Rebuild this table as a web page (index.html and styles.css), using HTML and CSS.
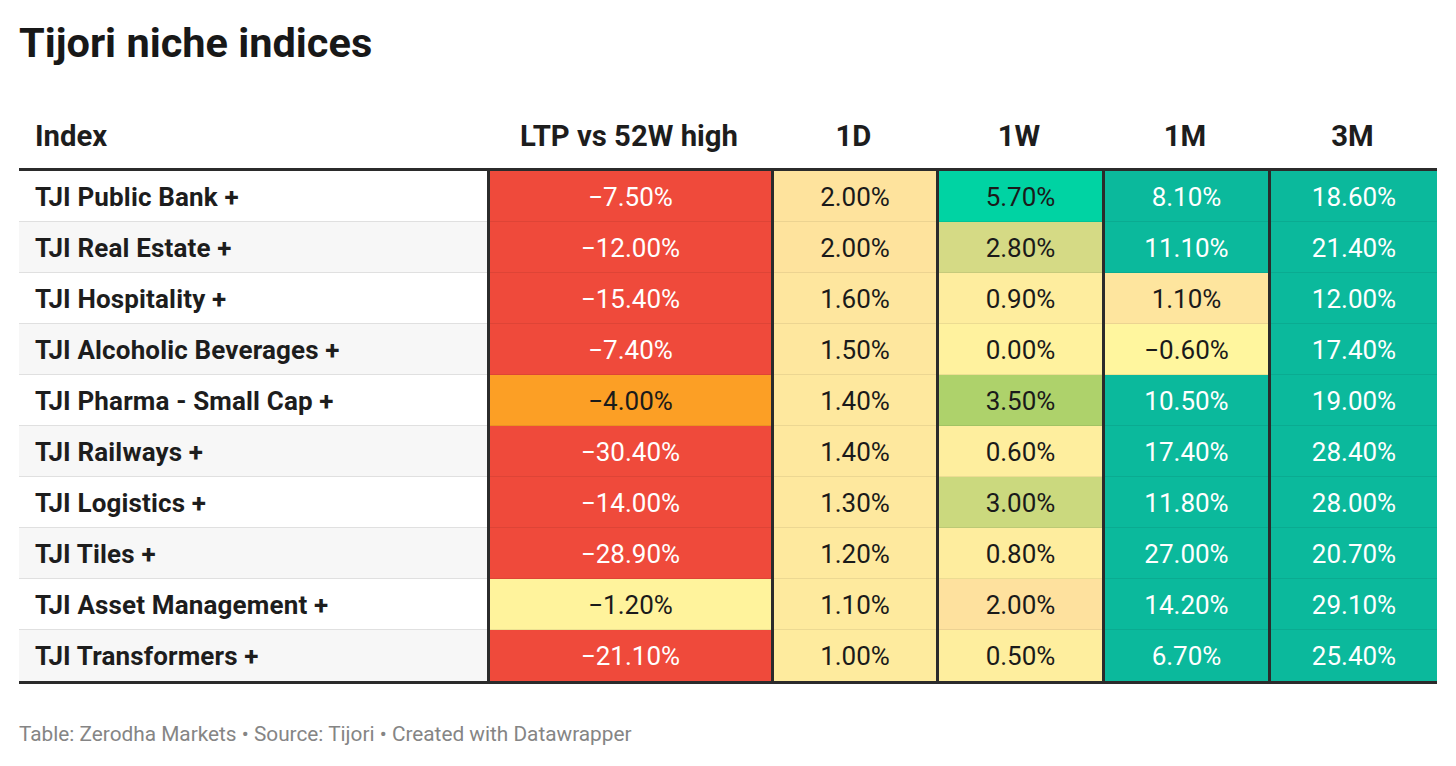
FILE: index.html
```html
<!DOCTYPE html>
<html lang="en">
<head>
<meta charset="utf-8">
<title>Tijori niche indices</title>
<link rel="stylesheet" href="styles.css">
</head>
<body>
<div class="chart">
  <h1 class="title">Tijori niche indices</h1>
  <div class="table">
    <div class="row head">
      <div class="th left">Index</div>
      <div class="th">LTP vs 52W high</div>
      <div class="th">1D</div>
      <div class="th">1W</div>
      <div class="th">1M</div>
      <div class="th">3M</div>
    </div>
    <div class="row">
      <div class="name">TJI Public Bank +</div>
      <div class="v red">−7.50%</div>
      <div class="v" style="background:#fee39d">2.00%</div>
      <div class="v" style="background:#00d3a3">5.70%</div>
      <div class="v teal">8.10%</div>
      <div class="v teal">18.60%</div>
    </div>
    <div class="row alt">
      <div class="name">TJI Real Estate +</div>
      <div class="v red">−12.00%</div>
      <div class="v" style="background:#fee39d">2.00%</div>
      <div class="v" style="background:#d5da85">2.80%</div>
      <div class="v teal">11.10%</div>
      <div class="v teal">21.40%</div>
    </div>
    <div class="row">
      <div class="name">TJI Hospitality +</div>
      <div class="v red">−15.40%</div>
      <div class="v" style="background:#fee69e">1.60%</div>
      <div class="v" style="background:#feed9e">0.90%</div>
      <div class="v" style="background:#fee59e">1.10%</div>
      <div class="v teal">12.00%</div>
    </div>
    <div class="row alt">
      <div class="name">TJI Alcoholic Beverages +</div>
      <div class="v red">−7.40%</div>
      <div class="v" style="background:#fee79e">1.50%</div>
      <div class="v" style="background:#fff29e">0.00%</div>
      <div class="v" style="background:#fff69e">−0.60%</div>
      <div class="v teal">17.40%</div>
    </div>
    <div class="row">
      <div class="name">TJI Pharma - Small Cap +</div>
      <div class="v" style="background:#fc9f25">−4.00%</div>
      <div class="v" style="background:#fee89e">1.40%</div>
      <div class="v" style="background:#aed26b">3.50%</div>
      <div class="v teal">10.50%</div>
      <div class="v teal">19.00%</div>
    </div>
    <div class="row alt">
      <div class="name">TJI Railways +</div>
      <div class="v red">−30.40%</div>
      <div class="v" style="background:#fee89e">1.40%</div>
      <div class="v" style="background:#feee9e">0.60%</div>
      <div class="v teal">17.40%</div>
      <div class="v teal">28.40%</div>
    </div>
    <div class="row">
      <div class="name">TJI Logistics +</div>
      <div class="v red">−14.00%</div>
      <div class="v" style="background:#fee89e">1.30%</div>
      <div class="v" style="background:#cbd97e">3.00%</div>
      <div class="v teal">11.80%</div>
      <div class="v teal">28.00%</div>
    </div>
    <div class="row alt">
      <div class="name">TJI Tiles +</div>
      <div class="v red">−28.90%</div>
      <div class="v" style="background:#fee99e">1.20%</div>
      <div class="v" style="background:#feed9e">0.80%</div>
      <div class="v teal">27.00%</div>
      <div class="v teal">20.70%</div>
    </div>
    <div class="row">
      <div class="name">TJI Asset Management +</div>
      <div class="v" style="background:#fff39c">−1.20%</div>
      <div class="v" style="background:#feea9e">1.10%</div>
      <div class="v" style="background:#fee19e">2.00%</div>
      <div class="v teal">14.20%</div>
      <div class="v teal">29.10%</div>
    </div>
    <div class="row alt last">
      <div class="name">TJI Transformers +</div>
      <div class="v red">−21.10%</div>
      <div class="v" style="background:#feeb9e">1.00%</div>
      <div class="v" style="background:#feee9e">0.50%</div>
      <div class="v teal">6.70%</div>
      <div class="v teal">25.40%</div>
    </div>
  </div>
  <div class="footer">Table: Zerodha Markets • Source: Tijori • Created with Datawrapper</div>
</div>
</body>
</html>
```

FILE: styles.css
```css
* { box-sizing: border-box; }

html, body {
  margin: 0;
  padding: 0;
  background: #ffffff;
}

body {
  font-family: Roboto, "Liberation Sans", Arial, sans-serif;
  color: #1d1d1d;
}

.chart {
  padding: 0 19px;
}

.title {
  margin: 0;
  padding-top: 18px;
  font-size: 41.5px;
  line-height: 50px;
  font-weight: 700;
  color: #181818;
}

.table {
  margin-top: 51px;
  width: 1418px;
  border-bottom: 3px solid #2b2b2b;
}

.row {
  display: grid;
  grid-template-columns: 468px 284px 165px 166px 166px 169px;
}

.head {
  border-bottom: 3px solid #2b2b2b;
}

.th {
  font-size: 29.3px;
  font-weight: 700;
  line-height: 34px;
  padding: 0 0 15px;
  text-align: center;
  color: #1d1d1d;
}

.th.left {
  text-align: left;
  padding-left: 16px;
}

.name {
  height: 51px;
  line-height: 52px;
  padding-left: 16px;
  font-size: 26px;
  letter-spacing: 0.15px;
  font-weight: 700;
  white-space: nowrap;
  background: #ffffff;
  border-bottom: 1px solid #e0e0e0;
}

.alt .name {
  background: #f7f7f7;
}

.v {
  height: 51px;
  line-height: 52px;
  text-align: center;
  font-size: 26px;
  font-weight: 400;
  color: #1a1a1a;
  border-left: 3px solid #2b2b2b;
  box-shadow: inset 0 -1px 0 rgba(0, 0, 0, 0.07);
}

.last .name {
  border-bottom: 0;
}

.last .v {
  box-shadow: none;
}

.red {
  background: #ef4a3b;
  color: #ffffff;
}

.teal {
  background: #0bb99c;
  color: #ffffff;
}

.footer {
  margin-top: 38px;
  font-size: 20.8px;
  line-height: 24px;
  color: #858585;
}
```
